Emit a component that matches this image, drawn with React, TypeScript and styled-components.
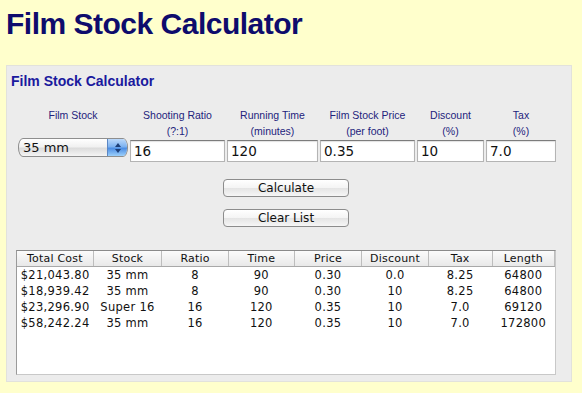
import React from 'react';
import styled, { createGlobalStyle } from 'styled-components';

const GlobalStyle = createGlobalStyle`
  html, body {
    margin: 0;
    padding: 0;
    background: #ffffcc;
  }
  body {
    font-family: 'Liberation Sans', Arial, sans-serif;
  }
`;

type Row = {
  cost: string;
  stock: string;
  ratio: string;
  time: string;
  price: string;
  discount: string;
  tax: string;
  length: string;
};

const rows: Row[] = [
  { cost: '$21,043.80', stock: '35 mm', ratio: '8', time: '90', price: '0.30', discount: '0.0', tax: '8.25', length: '64800' },
  { cost: '$18,939.42', stock: '35 mm', ratio: '8', time: '90', price: '0.30', discount: '10', tax: '8.25', length: '64800' },
  { cost: '$23,296.90', stock: 'Super 16', ratio: '16', time: '120', price: '0.35', discount: '10', tax: '7.0', length: '69120' },
  { cost: '$58,242.24', stock: '35 mm', ratio: '16', time: '120', price: '0.35', discount: '10', tax: '7.0', length: '172800' },
];

const columns = [
  { title: 'Total Cost', width: 76 },
  { title: 'Stock', width: 68 },
  { title: 'Ratio', width: 67 },
  { title: 'Time', width: 66 },
  { title: 'Price', width: 68 },
  { title: 'Discount', width: 66 },
  { title: 'Tax', width: 64 },
  { title: 'Length', width: 62 },
];

const fields = [
  { label: 'Shooting Ratio', sub: '(?:1)', value: '16', width: 95 },
  { label: 'Running Time', sub: '(minutes)', value: '120', width: 91 },
  { label: 'Film Stock Price', sub: '(per foot)', value: '0.35', width: 95 },
  { label: 'Discount', sub: '(%)', value: '10', width: 67 },
  { label: 'Tax', sub: '(%)', value: '7.0', width: 70 },
];

const Page = styled.div`
  padding: 6px 10px 0 6px;
`;

const Title = styled.h1`
  margin: 0;
  font-size: 30px;
  line-height: 36px;
  letter-spacing: -0.5px;
  font-weight: bold;
  color: #0e0c6c;
`;

const Panel = styled.div`
  margin-top: 23px;
  width: 566px;
  height: 317px;
  box-sizing: border-box;
  background: #ececec;
  border: 1px solid #e2e2dc;
  padding: 7px 0 0 10px;
`;

const PanelTitle = styled.h2`
  margin: 0 0 17px -6px;
  font-size: 14px;
  line-height: 17px;
  font-weight: bold;
  color: #1a1a9e;
`;

const FieldRow = styled.div`
  display: flex;
  gap: 2px;
  padding-left: 1px;
`;

const Field = styled.div<{ $w: number }>`
  width: ${(p) => p.$w}px;
  display: flex;
  flex-direction: column;
  align-items: stretch;
`;

const Label = styled.div`
  font-size: 10.5px;
  line-height: 16px;
  height: 32px;
  text-align: center;
  color: #23237c;
  margin-bottom: 1px;
  white-space: nowrap;
`;

const TextBox = styled.div`
  height: 22px;
  box-sizing: border-box;
  background: #ffffff;
  border: 1px solid #b4b4b4;
  border-top-color: #7c7c7c;
  box-shadow: inset 0 1px 1px rgba(0, 0, 0, 0.12);
  font-family: 'DejaVu Sans', sans-serif;
  font-size: 13.5px;
  line-height: 20px;
  padding-left: 3px;
  color: #111;
`;

const Select = styled.div`
  margin-top: -2px;
  height: 19px;
  box-sizing: border-box;
  border: 1px solid #8e8e8e;
  border-radius: 5px / 9px;
  background: linear-gradient(#ffffff 0%, #f1f1f1 45%, #dcdcdc 55%, #f4f4f4 100%);
  display: flex;
  align-items: center;
  justify-content: space-between;
  overflow: hidden;
  font-family: 'DejaVu Sans', sans-serif;
  font-size: 13px;
  color: #111;
  padding-left: 4px;
`;

const Stepper = styled.div`
  width: 19px;
  height: 100%;
  border-left: 1px solid #5b87c4;
  background: linear-gradient(#bcd9fb 0%, #7db2f0 45%, #4d8ee4 55%, #9cd0fb 100%);
  display: flex;
  align-items: center;
  justify-content: center;
`;

const ButtonColumn = styled.div`
  display: flex;
  flex-direction: column;
  align-items: flex-start;
  gap: 12px;
  margin: 17px 0 0 206px;
`;

const Button = styled.button`
  width: 126px;
  height: 18px;
  padding: 0;
  border: 1px solid #8c8c8c;
  border-radius: 4px;
  background: linear-gradient(#ffffff 0%, #f4f4f4 50%, #e4e4e4 51%, #f6f6f6 100%);
  font-family: 'DejaVu Sans', sans-serif;
  font-size: 12px;
  line-height: 16px;
  color: #111;
`;

const TableBox = styled.div`
  margin: 23px 0 0 -1px;
  width: 540px;
  height: 125px;
  box-sizing: border-box;
  background: #ffffff;
  border: 1px solid #c8c8c8;
  border-top-color: #8a8a8a;
  border-left-color: #9a9a9a;
`;

const Table = styled.table`
  border-collapse: collapse;
  table-layout: fixed;
  font-family: 'DejaVu Sans', sans-serif;
  color: #111;
`;

const HeadCell = styled.th<{ $w: number }>`
  width: ${(p) => p.$w}px;
  height: 15px;
  padding: 0;
  font-size: 11px;
  font-weight: normal;
  line-height: 15px;
  letter-spacing: 0.2px;
  background: linear-gradient(#fbfbfb, #e8e8e8);
  border-right: 1px solid #bdbdbd;
  border-bottom: 1px solid #a8a8a8;
`;

const Cell = styled.td`
  padding: 0;
  height: 16px;
  font-size: 11.5px;
  line-height: 16px;
  letter-spacing: 0.3px;
  text-align: center;
  white-space: nowrap;
`;

const Arrows = () => (
  <svg width="8" height="12" viewBox="0 0 8 12">
    <path d="M4 1 L7 5 L1 5 Z" fill="#1d3f78" />
    <path d="M4 11 L7 7 L1 7 Z" fill="#1d3f78" />
  </svg>
);

export default function App() {
  return (
    <Page>
      <GlobalStyle />
      <Title>Film Stock Calculator</Title>
      <Panel>
        <PanelTitle>Film Stock Calculator</PanelTitle>
        <FieldRow>
          <Field $w={110}>
            <Label>Film Stock</Label>
            <Select>
              35 mm
              <Stepper>
                <Arrows />
              </Stepper>
            </Select>
          </Field>
          {fields.map((f) => (
            <Field key={f.label} $w={f.width}>
              <Label>
                {f.label}
                <br />
                {f.sub}
              </Label>
              <TextBox>{f.value}</TextBox>
            </Field>
          ))}
        </FieldRow>
        <ButtonColumn>
          <Button>Calculate</Button>
          <Button>Clear List</Button>
        </ButtonColumn>
        <TableBox>
          <Table>
            <thead>
              <tr>
                {columns.map((c) => (
                  <HeadCell key={c.title} $w={c.width}>
                    {c.title}
                  </HeadCell>
                ))}
              </tr>
            </thead>
            <tbody>
              {rows.map((r, i) => (
                <tr key={i}>
                  <Cell>{r.cost}</Cell>
                  <Cell>{r.stock}</Cell>
                  <Cell>{r.ratio}</Cell>
                  <Cell>{r.time}</Cell>
                  <Cell>{r.price}</Cell>
                  <Cell>{r.discount}</Cell>
                  <Cell>{r.tax}</Cell>
                  <Cell>{r.length}</Cell>
                </tr>
              ))}
            </tbody>
          </Table>
        </TableBox>
      </Panel>
    </Page>
  );
}
